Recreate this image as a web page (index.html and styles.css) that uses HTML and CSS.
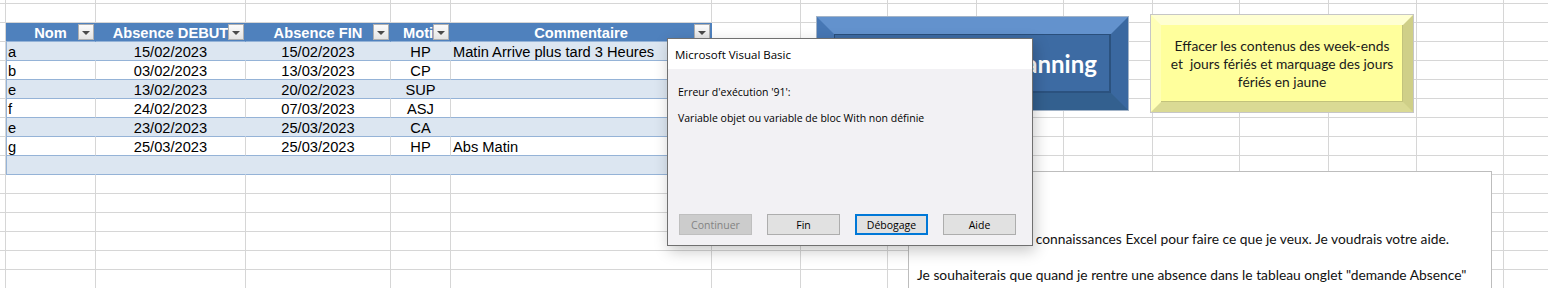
FILE: index.html
```html
<!DOCTYPE html>
<html lang="fr">
<head>
    <meta charset="UTF-8">
    <meta name="viewport" content="width=device-width, initial-scale=1.0">
    <title>Demande Absence</title>
    <link rel="stylesheet" href="styles.css">
</head>
<body>
    <div class="page">
        <div class="sheet" id="sheet"></div>

        <div class="macro-btn">
            <div class="macro-face">Mise à jour du Planning</div>
        </div>

        <div class="note-btn">
            <div class="note-face">Effacer les contenus des week-ends<br>et&nbsp; jours fériés et marquage des jours<br>fériés en jaune</div>
        </div>

        <div class="textbox">
            <p class="gap">Bonjour,</p>
            <p class="gap">Je n'ai pas assez de connaissances Excel pour faire ce que je veux. Je voudrais votre aide.</p>
            <p>Je souhaiterais que quand je rentre une absence dans le tableau onglet "demande Absence"</p>
            <p>que le tableau "planning" se mette automatiquement à jour avec la couleur du motif</p>
        </div>

        <div class="dialog">
            <div class="dlg-title">Microsoft Visual Basic</div>
            <div class="dlg-body">
                <p>Erreur d'exécution '91':</p>
                <p>Variable objet ou variable de bloc With non définie</p>
            </div>
            <div class="dlg-buttons">
                <button class="dlg-btn" disabled>Continuer</button>
                <button class="dlg-btn">Fin</button>
                <button class="dlg-btn default">Débogage</button>
                <button class="dlg-btn">Aide</button>
            </div>
        </div>
    </div>

    <script src="script.js"></script>
</body>
</html>
```

FILE: styles.css
```css
body {
    margin: 0;
    background: #fff;
    overflow: hidden;
}
.page {
    position: relative;
    width: 1548px;
    height: 288px;
    overflow: hidden;
}

/* feuille excel */
.sheet {
    display: grid;
    grid-template-columns: 6px 90px 150px 145px 60px 261px 89px 87px 89px 87px 89px 87px 89px 88px 87px 87px;
    grid-template-rows: 4px repeat(15, 19px);
    font-family: "Liberation Sans", Arial, sans-serif;
    font-size: 14.67px;
    color: #000;
}
.cell {
    position: relative;
    box-sizing: border-box;
    border-right: 1px solid #d6d6d6;
    border-bottom: 1px solid #d6d6d6;
    display: flex;
    align-items: flex-end;
    padding: 0 2px;
    line-height: 16px;
    white-space: nowrap;
    overflow: hidden;
}
.cell.center {
    justify-content: center;
}
.cell.head {
    background: #4f81bd;
    color: #fff;
    font-weight: bold;
    border-right-color: #4f81bd;
    border-bottom-color: #95b3d7;
    justify-content: center;
}
.cell.band {
    background: #dce6f1;
    border-right-color: #dce6f1;
    border-bottom-color: #95b3d7;
}
.cell.plain {
    border-bottom-color: #95b3d7;
}
.cell.edge {
    box-shadow: inset 1px 0 #95b3d7;
}
.filter {
    position: absolute;
    right: 1px;
    top: 1px;
    width: 16px;
    height: 16px;
    box-sizing: border-box;
    border: 1px solid #b0b0b0;
    background: linear-gradient(#fbfbfb, #e4e4e4);
}
.filter::after {
    content: "";
    position: absolute;
    left: 3px;
    top: 6px;
    border-left: 4px solid transparent;
    border-right: 4px solid transparent;
    border-top: 4px solid #4a4a4a;
}

/* boutons macro */
.macro-btn {
    position: absolute;
    left: 817px;
    top: 17px;
    width: 311px;
    height: 93px;
    box-sizing: border-box;
    border-style: solid;
    border-width: 17px;
    border-color: #6392cd #3a68a0 #33608f #4777b4;
    box-shadow: 0 0 0 1px #a3b4c8;
    background: #3d6ba3;
}
.macro-face {
    height: 100%;
    display: flex;
    align-items: center;
    justify-content: center;
    box-shadow: inset 1px 1px 0 #2a4f7c, inset -2px -2px 0 #2b527f;
    font-family: Lato, "Open Sans", sans-serif;
    font-weight: bold;
    font-size: 24px;
    color: #fff;
}
.note-btn {
    position: absolute;
    left: 1151px;
    top: 15px;
    width: 262px;
    height: 97px;
    box-sizing: border-box;
    border-style: solid;
    border-width: 10px;
    border-color: #ffffd2 #cfcf88 #dada94 #ffffb6;
    box-shadow: 0 0 0 1px #c6c6c6;
    background: #ffff9c;
}
.note-face {
    height: 100%;
    display: flex;
    align-items: center;
    justify-content: center;
    text-align: center;
    box-shadow: inset -1px -1px 0 #c2c27c;
    font-family: Lato, "Open Sans", sans-serif;
    font-size: 13.8px;
    line-height: 18px;
    color: #1a1a1a;
}

/* zone de texte */
.textbox {
    position: absolute;
    left: 908px;
    top: 171px;
    width: 584px;
    height: 140px;
    box-sizing: border-box;
    border: 1px solid #bdbdbd;
    background: #fff;
    padding: 22px 8px;
    font-family: Lato, "Open Sans", sans-serif;
    font-size: 13.8px;
    line-height: 18px;
    color: #111;
}
.textbox p {
    margin: 0;
    white-space: nowrap;
}
.textbox p.gap {
    margin-bottom: 18px;
}

/* boite de dialogue vba */
.dialog {
    position: absolute;
    left: 667px;
    top: 38px;
    width: 366px;
    height: 208px;
    box-sizing: border-box;
    border: 1px solid #707070;
    background: #f2f1f4;
    box-shadow: 2px 5px 14px rgba(0,0,0,0.22);
    display: flex;
    flex-direction: column;
    font-family: "Open Sans", "Noto Sans", sans-serif;
    font-size: 10.5px;
    color: #000;
}
.dlg-title {
    height: 30px;
    background: #fff;
    display: flex;
    align-items: center;
    padding-left: 7px;
    font-size: 11.5px;
}
.dlg-body {
    padding: 15px 10px 0;
}
.dlg-body p {
    margin: 0 0 10px;
    line-height: 16px;
}
.dlg-buttons {
    margin-top: auto;
    display: flex;
    gap: 15px;
    padding: 0 0 10px 11px;
}
.dlg-btn {
    width: 73px;
    height: 21px;
    box-sizing: border-box;
    border: 1px solid #adadad;
    background: #e1e1e1;
    font-family: inherit;
    font-size: 10.5px;
    color: #000;
    padding: 0;
}
.dlg-btn:disabled {
    background: #cccccc;
    border-color: #bfbfbf;
    color: #838383;
}
.dlg-btn.default {
    border: 2px solid #0078d7;
}
```

FILE: script.js
```js
// grille de la feuille + tableau des absences
const COLS = 16;
const ROWS = 16;
const HEAD_ROW = 2;

const headers = ['Nom', 'Absence DEBUT', 'Absence FIN', 'Motif', 'Commentaire'];
const data = [
    ['a', '15/02/2023', '15/02/2023', 'HP', 'Matin Arrive plus tard 3 Heures'],
    ['b', '03/02/2023', '13/03/2023', 'CP', ''],
    ['e', '13/02/2023', '20/02/2023', 'SUP', ''],
    ['f', '24/02/2023', '07/03/2023', 'ASJ', ''],
    ['e', '23/02/2023', '25/03/2023', 'CA', ''],
    ['g', '25/03/2023', '25/03/2023', 'HP', 'Abs Matin'],
    ['', '', '', '', '']
];
const centered = [false, true, true, true, false];

const sheet = document.getElementById('sheet');

for (let r = 0; r < ROWS; r++) {
    for (let c = 0; c < COLS; c++) {
        const cell = document.createElement('div');
        cell.className = 'cell';
        const col = c - 1;
        const inTable = col >= 0 && col < headers.length;

        if (inTable && r === HEAD_ROW) {
            cell.className += ' head';
            cell.textContent = headers[col];
            const btn = document.createElement('span');
            btn.className = 'filter';
            cell.appendChild(btn);
        } else if (inTable && r > HEAD_ROW && r <= HEAD_ROW + data.length) {
            const i = r - HEAD_ROW - 1;
            cell.className += i % 2 === 0 ? ' band' : ' plain';
            if (centered[col]) cell.className += ' center';
            cell.textContent = data[i][col];
        }
        if (inTable && col === 0 && r > HEAD_ROW && r <= HEAD_ROW + data.length) {
            cell.className += ' edge';
        }
        sheet.appendChild(cell);
    }
}
```
